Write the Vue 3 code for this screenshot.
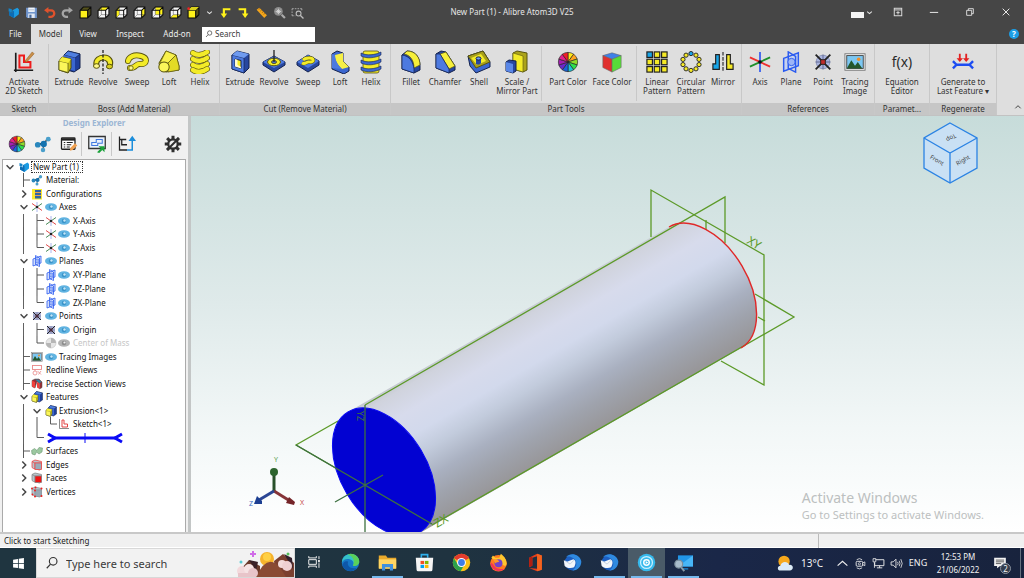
<script setup>
const qa = (part) => {
  const y = '#fff21a'
  const faces = {
    front: `<path d="M2 8H16V22H2Z" fill="${y}"/>`,
    top: `<path d="M2 8L8 2H22L16 8Z" fill="${y}"/>`,
    left: `<path d="M2 8L8 2V16L2 22Z" fill="${y}"/>`,
    right: `<path d="M16 8L22 2V16L16 22Z" fill="${y}"/>`,
    back: `<path d="M8 2H22V16H8Z" fill="${y}"/>`,
    bottom: `<path d="M2 22L8 16H22L16 22Z" fill="${y}"/>`,
  }
  const solid = part === 'front'
  return `<path d="M2 8L8 2H22V16L16 22H2Z" fill="${solid ? '#55521a' : '#f6f6f6'}"/>${faces[part]}
  ${solid ? '' : '<path d="M8 3V16H22M8 16L2 22" stroke="#555" stroke-width="1" fill="none"/>'}
  <path d="M2 8L8 2H22V16L16 22H2ZM2 8H16V22M16 8L22 2" stroke="#0c0c0c" stroke-width="1.900" fill="none"/>`
}

const wheel = (() => {
  const cols = ['#ffe81a', '#ffa51f', '#8edb2a', '#2fe04c', '#1fc3d6', '#1a62d8', '#6a28c8', '#a31fb0', '#e3208c', '#f01f2a']
  return cols.map((c, i) => {
    const a = (i * 36 - 90) * Math.PI / 180, b = (i * 36 - 54) * Math.PI / 180
    const p = (t) => `${(12 + 10.5 * Math.cos(t)).toFixed(2)} ${(12 + 10.5 * Math.sin(t)).toFixed(2)}`
    return `<path d="M12 12L${p(a)}A10.500 10.500 0 0 1 ${p(b)}Z" fill="${c}" stroke="#222" stroke-width=".7"/>`
  }).join('')
})()

const ring = Array.from({ length: 10 }, (_, i) => {
  const a = (i * 36 - 90) * Math.PI / 180
  return `<circle cx="${(12 + 9.2 * Math.cos(a)).toFixed(2)}" cy="${(12 + 9.2 * Math.sin(a)).toFixed(2)}" r="2.300" fill="${i ? '#f6ea26' : '#18a5e8'}" stroke="#222" stroke-width="1"/>`
}).join('')

const squares = [1, 9, 17].flatMap((y, r) => [1, 9, 17].map((x, c) =>
  `<rect x="${x}" y="${y}" width="6" height="6" fill="${r + c ? '#f6ea26' : '#18a5e8'}" stroke="#222" stroke-width="1.300"/>`)).join('')

const thunderbird = `<circle cx="12" cy="12" r="10" fill="#1d5fc0"/><path d="M4 5C9 -1 21 1 23 10C24 18 16 23 12 22C19 17 18 9 12 6C9 4 6 4 4 5Z" fill="#2f8ae0"/><path d="M1 9L5 11L13 8C16 9 17 13 14 18C10 20 4 19 2 16Z" fill="#f3f6fa"/><path d="M3 10L9 14L14 9" stroke="#b9c8da" fill="none"/>`
const boxIcon = `<path d="M7 5L11 1L23 4V18L17 22L7 19Z" fill="#1f3f9c" stroke="#14224e"/><path d="M7 5L18 8L23 4L11 1Z" fill="#4f7fe0" stroke="#14224e" stroke-width=".7"/><path d="M7 5L18 8V21L7 18Z" fill="#3b67cf"/><path d="M2 11L5 7L14 9V18L11 23L2 20Z" fill="#c9c21c" stroke="#4c4a10"/><path d="M2 11L11 13V22.500L2 20Z" fill="#fbf65a" stroke="#4c4a10" stroke-width=".7"/><path d="M2 11L5 7L14 9L11 13Z" fill="#f3ee3a"/>`
const picture = `<rect x="1" y="3" width="22" height="18" fill="#f4f4f4" stroke="#777"/><rect x="3" y="5" width="18" height="14" fill="#7cc7f2" stroke="#444"/><path d="M3 19L8 10L12 16L15 12L20 19Z" fill="#24572c"/><circle cx="16" cy="9" r="2" fill="#f0902a"/>`
const edgeBox = (s, f) => `<path d="M2 5L8 2L21 5V19L17 22L5 19L2 17Z" fill="#b9c4cc" stroke="${s}" stroke-width="1.600"/><path d="M2 5L8 8H21M8 8V21" stroke="${s}" stroke-width="1.600" fill="none"/><path d="M8 8H21V21H8Z" fill="${f}" stroke="${s}" stroke-width="1.400"/>`

const icons = {
  part: `<path d="M3 4L9 6V12L3 10Z" fill="#1684c9"/><path d="M10 8L19 3L22 6V15L13 22L4 17V11L10 13Z" fill="#1c9be2"/><path d="M10 8L13 10V22L4 17V11L10 13Z" fill="#0c6cb5"/>`,
  save: `<path d="M2 3H22V22H4L2 20Z" fill="#6f94cc"/><rect x="6" y="3" width="12" height="8" fill="#f0f4fa"/><rect x="6" y="14" width="12" height="8" fill="#e2e9f3"/><rect x="8" y="16" width="4" height="6" fill="#45699f"/><path d="M7 7H17" stroke="#9aa9c0" stroke-width="1.200"/>`,
  undo: `<path d="M10 2L2 8L10 14V10H15C20 10 20 18 14 18H10V22H15C26 21 25 6 15 6H10Z" fill="#e0522c"/>`,
  redo: `<path d="M14 2L22 8L14 14V10H9C4 10 4 18 10 18H13V22H9C-2 21 -1 6 9 6H14Z" fill="#a6a6a6"/>`,
  qfront: qa('front'), qtop: qa('top'), qleft: qa('left'), qright: qa('right'), qback: qa('back'), qbottom: qa('bottom'),
  qiso: qa('front') + '<path d="M2 8L8 2H22L16 8Z" fill="#d8cf1c"/><circle cx="3" cy="5" r="2.500" fill="#e22"/>',
  caret: `<path d="M4 9L12 16L20 9" fill="none" stroke="#e8e8e8" stroke-width="3.500"/>`,
  stepl: `<path d="M21 6H9V15" stroke="#fff21a" stroke-width="4" fill="none"/><path d="M3 14H15L9 22Z" fill="#fff21a"/>`,
  stepr: `<path d="M3 6H15V15" stroke="#fff21a" stroke-width="4" fill="none"/><path d="M9 14H21L15 22Z" fill="#fff21a"/>`,
  ruler: `<path d="M3 7L8 3L22 17L17 22Z" fill="#f3a51c"/><path d="M9 4L7 7M12 7L10 10M15 10L13 13M18 13L16 16" stroke="#8a5200" stroke-width="1"/>`,
  zoomfit: `<circle cx="10" cy="10" r="8" fill="#8d8d8d"/><path d="M5 10H15M10 5V15M7 7L13 13M13 7L7 13" stroke="#ddd" stroke-width="1.500"/><path d="M16 16L22 22" stroke="#aaa" stroke-width="4"/>`,
  zoomwin: `<path d="M2 5H20M2 18H8M2 5V18M20 5V9" stroke="#aaa" stroke-width="1.800" stroke-dasharray="3 2" fill="none"/><circle cx="14" cy="14" r="4.500" fill="none" stroke="#bbb" stroke-width="2"/><path d="M17 17L23 23" stroke="#bbb" stroke-width="2.500"/>`,
  sketch: `<path d="M3 2V21H22M1 21H3V23" stroke="#1a1a1a" stroke-width="1.800" fill="none"/><path d="M7 5H12V12H19V18H7Z" fill="none" stroke="#ee1c1c" stroke-width="2.200"/><path d="M13 11L21 1L23 3L15 12Z" fill="#c98f4a" stroke="#96601f" stroke-width=".6"/>`,
  extrude: boxIcon,
  revolve: `<path d="M3 15C2 8 8 5 13 5C20 5 23 11 21 16L16 17C18 12 15 10 12 10C8 10 7 13 8 16Z" fill="#f3eb28" stroke="#59540f" stroke-width="1.200"/><ellipse cx="5.500" cy="16" rx="3" ry="2.300" fill="#fff98a" stroke="#59540f"/><ellipse cx="18.500" cy="16.500" rx="3" ry="2.300" fill="#d4cc20" stroke="#59540f"/><path d="M12 0V24" stroke="#222" stroke-width="1.300" stroke-dasharray="3 1.500"/>`,
  sweep: `<path d="M5 18C12 18 10 13 16 14C22 14 23 8 16 6C9 4 4 7 3 11" fill="none" stroke="#59540f" stroke-width="6" stroke-linecap="round"/><path d="M5 18C12 18 10 13 16 14C22 14 23 8 16 6C9 4 4 7 3 11" fill="none" stroke="#f3eb28" stroke-width="4.400" stroke-linecap="round"/><circle cx="6" cy="18" r="2.200" fill="#fff98a" stroke="#59540f" stroke-width=".8"/>`,
  loft: `<path d="M9 1L19 5L22 16V20L9 22L3 18L2 13Z" fill="#cfc71e" stroke="#59540f"/><path d="M9 1L19 5L11 13L3 13Z" fill="#f8f14c" stroke="#59540f" stroke-width=".7"/><path d="M19 5L22 16V20L11 22L11 13Z" fill="#e3db26" stroke="#59540f" stroke-width=".7"/><ellipse cx="7" cy="17" rx="5.200" ry="5" fill="#fbf65a" stroke="#59540f"/>`,
  helix: [4, 10, 16, 21].map(y => `<path d="M5 ${y - 1}C9 ${y + 2} 15 ${y + 1} 19 ${y - 2}" fill="none" stroke="#59540f" stroke-width="5.800" stroke-linecap="round"/><path d="M5 ${y - 1}C9 ${y + 2} 15 ${y + 1} 19 ${y - 2}" fill="none" stroke="#f3eb28" stroke-width="4.600" stroke-linecap="round"/>`).join(''),
  cutextrude: `<path d="M4 5L9 1L21 4V18L16 23L4 19Z" fill="#27479f" stroke="#14224e"/><path d="M4 5L16 8V23L4 19Z" fill="#4d7ae0" stroke="#14224e" stroke-width=".7"/><path d="M4 5L16 8L21 4L9 1Z" fill="#6f9bf0"/><path d="M7 9L13 10.500V18.500L7 16.500Z" fill="#f3eb28" stroke="#14224e"/><path d="M7 9L9.500 9.700V15L13 17V18.500L7 16.500Z" fill="#fffbd0"/>`,
  cutrevolve: `<path d="M1 12L12 6L23 12V15L12 22L1 15Z" fill="#27479f" stroke="#14224e"/><path d="M1 12L12 6L23 12L12 18Z" fill="#4d7ae0"/><ellipse cx="12" cy="12" rx="6.500" ry="3.800" fill="#f3eb28" stroke="#59540f"/><ellipse cx="12" cy="12" rx="2.500" ry="1.500" fill="#4d7ae0" stroke="#59540f"/><path d="M12 0V12" stroke="#222" stroke-width="1.300"/>`,
  cutsweep: `<path d="M1 12L12 5L23 11V15L12 22L1 15Z" fill="#27479f" stroke="#14224e"/><path d="M1 12L12 5L23 11L12 18Z" fill="#4d7ae0"/><path d="M6 13C10 15 10 11 14 12C19 12 18 8 13 8C10 8 8 9 7 10" fill="none" stroke="#59540f" stroke-width="3.800"/><path d="M6 13C10 15 10 11 14 12C19 12 18 8 13 8C10 8 8 9 7 10" fill="none" stroke="#f3eb28" stroke-width="2.800"/>`,
  cutloft: `<path d="M4 4L9 1L15 3V11L21 17V21L16 24L4 19Z" fill="#3b67cf" stroke="#14224e"/><path d="M7 5L15 3V11L21 17L14 19C10 15 7 11 7 5Z" fill="#f6ef45"/><path d="M7 5C7 11 10 15 14 19L4 18V4Z" fill="#4d7ae0"/>`,
  cuthelix: `<rect x="4" y="1" width="16" height="22" rx="2" fill="#f3eb28" stroke="#59540f" stroke-width=".8"/>` + [3, 10, 17].map(y => `<path d="M2 ${y}C8 ${y + 3} 16 ${y + 2} 22 ${y - 1}V${y + 2}C16 ${y + 5} 8 ${y + 6} 2 ${y + 3}Z" fill="#3b67cf" stroke="#14224e" stroke-width=".6"/>`).join(''),
  fillet: `<path d="M3 5L8 1C17 1 21 8 21 16V20L15 23L3 19Z" fill="#27479f" stroke="#14224e"/><path d="M8 1C17 1 21 8 21 15L15 18C15 10 11 5 5 4Z" fill="#f6ef3a" stroke="#59540f" stroke-width=".7"/><path d="M3 5C11 6 14 12 15 19V23L3 19Z" fill="#4d7ae0" stroke="#14224e" stroke-width=".7"/>`,
  chamfer: `<path d="M3 4L8 1L13 2L22 16V20L16 23L3 18Z" fill="#27479f" stroke="#14224e"/><path d="M7 4L13 2L22 16L16 19Z" fill="#f6ef3a" stroke="#59540f" stroke-width=".7"/><path d="M3 4H7L16 19V23L3 18Z" fill="#4d7ae0" stroke="#14224e" stroke-width=".7"/>`,
  shell: `<path d="M1 6L16 1L23 12V17L9 23L3 16Z" fill="#3b67cf" stroke="#14224e"/><path d="M1 6L16 1L23 12L9 18Z" fill="#a8a01a" stroke="#59540f"/><path d="M4 8L14 4L19 11L10 15Z" fill="#f3eb28"/><path d="M9 9V14C10 15 13 15 14 13V8Z" fill="#27479f"/><ellipse cx="11.500" cy="8.500" rx="2.500" ry="1.600" fill="#6f9bf0" stroke="#14224e"/>`,
  scale: `<path d="M8 3L12 1L22 3V20L18 22L8 19Z" fill="#aba31a" stroke="#59540f"/><path d="M8 3L18 6V22L8 19Z" fill="#f3eb28" stroke="#59540f" stroke-width=".6"/><path d="M1 12L4 10L11 11V21L8 23L1 21Z" fill="#27479f" stroke="#14224e"/><path d="M1 12L8 14V23L1 21Z" fill="#5a88e8"/>`,
  wheel,
  facecolor: `<path d="M2 5L12 2L22 5L12 9Z" fill="#3f80e8" stroke="#666" stroke-width=".6"/><path d="M2 5L12 9V23L2 18Z" fill="#e0302e" stroke="#666" stroke-width=".6"/><path d="M22 5L12 9V23L22 18Z" fill="#58dc38" stroke="#666" stroke-width=".6"/>`,
  linear: squares,
  circular: ring,
  mirror: `<path d="M8 4V20H1V14H4V4Z" fill="#18a5e8" stroke="#222" stroke-width="1.300"/><path d="M16 4V20H23V14H20V4Z" fill="#f6ea26" stroke="#222" stroke-width="1.300"/><path d="M12 1V23" stroke="#222" stroke-width="1.200" stroke-dasharray="4 1.500"/>`,
  axis: `<path d="M12 1V23" stroke="#3c62ee" stroke-width="2"/><path d="M1 7L23 17" stroke="#ee3030" stroke-width="2"/><path d="M23 7L1 17" stroke="#1f8f2a" stroke-width="2"/><circle cx="12" cy="12" r="2" fill="#111"/>`,
  plane: `<path d="M4 8L20 2V16L4 22Z" fill="#b9cbf8" fill-opacity=".6" stroke="#2b5bf0" stroke-width="1.600"/><path d="M9 1L17 6V23L9 19Z" fill="none" stroke="#2b5bf0" stroke-width="1.600"/><circle cx="12.500" cy="12" r="4" fill="#9db5f6" stroke="#2b5bf0"/>`,
  point: `<circle cx="12" cy="12" r="7.500" fill="#a9b3de" stroke="#8790b5"/><path d="M4 4L20 20M20 4L4 20" stroke="#222" stroke-width="2"/><path d="M4 12H20M12 4V20" stroke="#5c648a" stroke-width="1"/><rect x="9.500" y="9.500" width="5" height="5" fill="#c22b2b" stroke="#222"/>`,
  image: picture,
  fx: `<text x="12" y="17" font-size="15" text-anchor="middle" fill="#2a2a2a" font-family="Noto Sans, sans-serif">f(x)</text>`,
  generate: `<path d="M8.500 3V10M15.500 3V10" stroke="#e32020" stroke-width="2"/><path d="M5 8L8.500 12L12 8ZM12 8L15.500 12L19 8Z" fill="#e32020"/><path d="M1 11L5 15H19L23 11M1 19L5 15M23 19L19 15" stroke="#1c4cf2" stroke-width="2.600" fill="none"/>`,
  material: `<path d="M5 13L13 12L18 6M13 12L12 19" stroke="#444" stroke-width="1.500"/><circle cx="5" cy="13" r="3.800" fill="#2a87bd"/><circle cx="13" cy="12" r="4.200" fill="#1473b0"/><circle cx="19" cy="5.500" r="3.300" fill="#4a9fcb"/><circle cx="12" cy="20" r="3" fill="#4a9fcb"/>`,
  props: `<rect x="2" y="4" width="18" height="15" rx="1" fill="#fff" stroke="#222" stroke-width="1.700"/><path d="M2 6H20" stroke="#222" stroke-width="3"/><path d="M5 10H7M9 10H17M5 13H7M9 13H15M5 16H7M9 16H13" stroke="#222" stroke-width="1.400"/><path d="M13 21L14 17L20 11L23 14L17 20Z" fill="#efa050"/>`,
  sketchview: `<path d="M1 2H23V18H1Z" fill="#eaf1fb" stroke="#333" stroke-width="1.700"/><path d="M5 14V10H11V6H19V11H13V14Z" fill="none" stroke="#3f78e0" stroke-width="1.400"/><path d="M12 23L17 18L14 15H22V23L19 20L15 24Z" fill="#1ba23b"/>`,
  treeup: `<path d="M2 2V20H8M2 6H8M5 6V13H9M8 6H11M8 13H12M8 20H12" stroke="#222" stroke-width="1.700" fill="none"/><path d="M12 20H19V5" stroke="#1c8edb" stroke-width="2" fill="none"/><path d="M14 8L19 1L24 8Z" fill="#1c8edb"/>`,
  gear: `<circle cx="12" cy="12" r="6.300" fill="none" stroke="#2f2f2f" stroke-width="3"/>` + [0, 45, 90, 135, 180, 225, 270, 315].map(a => `<rect x="10" y="1" width="4" height="5" fill="#2f2f2f" transform="rotate(${a} 12 12)"/>`).join('') + `<path d="M4 20L20 4" stroke="#2f2f2f" stroke-width="2.500"/>`,
  config: `<rect x="2" y="2" width="20" height="21" fill="#f7ea30"/><rect x="8" y="4" width="12" height="17" fill="#2d65a5"/><path d="M8 9H20M8 15H20" stroke="#e9a04a" stroke-width="2"/>`,
  taxis: `<path d="M12 2V22" stroke="#8f9fe8" stroke-width="1.500"/><path d="M2 5L22 19" stroke="#e04a4a" stroke-width="2"/><path d="M22 5L2 19" stroke="#4a8a58" stroke-width="2"/><circle cx="12" cy="12" r="2.500" fill="#222"/>`,
  eye: `<ellipse cx="12" cy="12" rx="12" ry="7.500" fill="#61b4e2"/><circle cx="12" cy="12" r="4.500" fill="#3a93c9"/><circle cx="13" cy="11" r="2.400" fill="#c5e6f7"/>`,
  eyeoff: `<ellipse cx="12" cy="12" rx="12" ry="7.500" fill="#b4b4b4"/><circle cx="12" cy="12" r="4.500" fill="#8d8d8d"/><circle cx="13" cy="11" r="2.200" fill="#eee"/>`,
  tpoint: `<rect x="4" y="4" width="16" height="16" fill="#aab0d2"/><path d="M4 4L20 20M20 4L4 20" stroke="#222" stroke-width="2"/><path d="M12 4V20M4 12H20" stroke="#7a7fa5" stroke-width="1.200"/><rect x="9" y="9" width="6" height="6" fill="#4a2a3a"/>`,
  com: `<circle cx="12" cy="12" r="10" fill="#e6e6e6" stroke="#b2b2b2"/><path d="M12 12V2A10 10 0 0 1 22 12ZM12 12V22A10 10 0 0 1 2 12Z" fill="#b6b6b6"/>`,
  redline: `<rect x="3" y="3" width="18" height="8" fill="none" stroke="#e98888" stroke-width="1.800"/><circle cx="8" cy="18" r="4" fill="none" stroke="#e98888" stroke-width="1.600"/><path d="M13 14L20 21M20 14L15 21M8 11V14" stroke="#e98888" stroke-width="1.600"/>`,
  section: `<path d="M2 5L8 2H16L22 8V19L17 22V11L12 7L8 20L2 17Z" fill="#9a2f35" stroke="#444"/><path d="M2 5L8 8V20L2 17ZM12 8L17 11V22L12 19Z" fill="#f0403c"/><path d="M8 3H15L21 8L17 10L12 6Z" fill="#2b8aa8"/>`,
  feature: boxIcon,
  tsketch: `<path d="M3 2V21H22" stroke="#666" stroke-width="1.500" fill="none"/><path d="M8 4H12V12H19V18H8Z" fill="none" stroke="#e24545" stroke-width="2"/>`,
  surface: `<path d="M1 11L7 7L12 11L16 5L23 6L22 14L16 18L11 14L8 20L2 18Z" fill="#9cc8a0" stroke="#5f8a66"/>`,
  edges: edgeBox('#e44', '#9aabb8'),
  faces: edgeBox('#888', '#f01414'),
  vertices: edgeBox('#8a969e', '#98a6b2') + [[2, 5], [9, 3], [21, 5], [8, 9], [21, 20], [8, 21], [3, 17]].map(([x, y]) => `<circle cx="${x}" cy="${y}" r="2" fill="#ee2222"/>`).join(''),
  winstart: `<path d="M2 5L11 3.500V11.500H2ZM12.500 3.300L22 2V11.500H12.500ZM2 13H11V20.500L2 19.200ZM12.500 13H22V22L12.500 20.700Z" fill="#fff"/>`,
  taskview: `<path d="M3 2V5H16V2M3 22V19H16V22M3 8H16V16H3Z" fill="none" stroke="#eee" stroke-width="1.700"/><path d="M20.500 2V7M20.500 14V22" stroke="#eee" stroke-width="1.700"/><rect x="19" y="8.500" width="3" height="4" fill="#eee"/>`,
  edge: `<circle cx="12" cy="12" r="11" fill="#1677c8"/><path d="M1.500 9C4 0 18 -2 22 7C25 13 20 17 15 16C17 14 16 9 11 8C7 7 3 8 1.500 12Z" fill="#35c1c9"/><path d="M12 1C20 1 24 8 23 12C22 16 18 17 15 16C18 11 16 4 8 2Z" fill="#5bd05a"/><path d="M9 11C7 16 12 21 20 18.500C15 25 5 24 2 16C2 12 6 9 9 11Z" fill="#0e57a8"/>`,
  folder: `<path d="M1 3H10L12 6H23V19H1Z" fill="#e9a92b"/><path d="M1 8H23V20H1Z" fill="#ffd663"/><path d="M5 22V14H19V22H15V18H9V22Z" fill="#3f91de"/>`,
  store: `<path d="M8 6V2H16V6" fill="none" stroke="#2fb0ec" stroke-width="2"/><path d="M1 6H23L22 21Q22 23 20 23H4Q2 23 2 21Z" fill="#f5f5f5"/><path d="M7 10H11.500V14H7Z" fill="#f25022"/><path d="M12.500 10H17V14H12.500Z" fill="#7fba00"/><path d="M7 15H11.500V19H7Z" fill="#00a4ef"/><path d="M12.500 15H17V19H12.500Z" fill="#ffb900"/>`,
  chrome: `<circle cx="12" cy="12" r="11" fill="#fbc116"/><path d="M12 12L2.500 6.500A11 11 0 0 1 21.500 6.500Z" fill="#e33b2e"/><path d="M2.500 6.500A11 11 0 0 0 11 23L16 14L7 14Z" fill="#2ca14c"/><circle cx="12" cy="12" r="5.600" fill="#fff"/><circle cx="12" cy="12" r="4.300" fill="#3f7de8"/>`,
  firefox: `<circle cx="12" cy="13" r="10.500" fill="#ff7a1f"/><path d="M3 6L5 3L8 6L13 6L15 1C20 5 23 10 22 15C18 20 14 8 7 9Z" fill="#ffc62e"/><path d="M2 12C2 22 13 26 20 20C14 21 8 20 5 14Z" fill="#f23558"/><circle cx="12" cy="13" r="5" fill="#7442c8"/><path d="M5 8C9 7 12 9 13 11C11 12 10 11 8 13Z" fill="#ff9a25"/>`,
  office: `<path d="M4 6L14 1L20 3V21L14 23L4 19L14 20V4L8 6V16L4 18Z" fill="#e8401c"/><path d="M4 6L8 4V16L4 18Z" fill="#b01f12"/><path d="M14 1L20 3V21L14 23Z" fill="#f4641f"/>`,
  thunderbird,
  alibre: `<circle cx="12" cy="12" r="11" fill="#36b9ec"/><circle cx="12" cy="12" r="7.500" fill="none" stroke="#c9f0ff" stroke-width="1.600"/><circle cx="12" cy="12" r="3.500" fill="none" stroke="#fff" stroke-width="1.800"/><path d="M11 10L14 12L11 14Z" fill="#fff"/>`,
  remote: `<path d="M5 3H24V17H5Z" fill="#2196e8"/><path d="M5 17L24 3V17Z" fill="#48b6f7"/><path d="M10 19H18V21H10Z" fill="#1676bd"/><circle cx="6" cy="14" r="5" fill="#a8bccb" stroke="#7a8d9b" stroke-width="1.500"/><path d="M9 18L13 23" stroke="#8a9aa6" stroke-width="2.500"/>`,
  weather: `<circle cx="10" cy="9" r="8" fill="#f6a81c"/><path d="M5 22C0 22 0 15 5 15C6 9 15 8 17 14C24 13 24 22 18 22Z" fill="#dcebf7"/>`,
  up: `<path d="M3 16L12 8L21 16" fill="none" stroke="#eee" stroke-width="2.200"/>`,
  cam: `<rect x="4" y="8" width="12" height="9" rx="2" fill="none" stroke="#eee" stroke-width="1.700"/><path d="M16 11L20 9V16L16 14" fill="none" stroke="#eee" stroke-width="1.500"/><circle cx="10" cy="12.500" r="2" fill="none" stroke="#eee" stroke-width="1.300"/><path d="M5 5Q10 1 15 5M5 20Q10 24 15 20" stroke="#eee" stroke-width="1.500" fill="none"/>`,
  net: `<path d="M7 5H22V16H5V11M14 16V20M9 20H19" fill="none" stroke="#eee" stroke-width="1.700"/><path d="M2 3H7V9H2ZM4.500 9V20" fill="none" stroke="#eee" stroke-width="1.500"/>`,
  sound: `<path d="M2 9H6L11 4V20L6 15H2Z" fill="none" stroke="#eee" stroke-width="1.600"/><path d="M14 9Q16 12 14 15M17 7Q20 12 17 17M20 4Q25 12 20 20" fill="none" stroke="#eee" stroke-width="1.500"/>`,
  note: `<path d="M2 3H22V17H12L7 21V17H2Z" fill="#f2f2f2"/><path d="M5 7H19M5 10H19M5 13H14" stroke="#333" stroke-width="1.300"/>`,
  ribbonopt: `<rect x="3" y="3" width="18" height="18" fill="none" stroke="#ddd" stroke-width="2.300"/><path d="M3 7H21" stroke="#ddd" stroke-width="2.300"/><path d="M12 18V10M8 13.500H16" stroke="#ddd" stroke-width="2.300"/>`,
  min: `<path d="M2 13H22" stroke="#eee" stroke-width="2.300"/>`,
  restore: `<path d="M4 8H16V20H4Z" fill="none" stroke="#eee" stroke-width="2"/><path d="M8 8V4H20V16H16" fill="none" stroke="#eee" stroke-width="2"/>`,
  close: `<path d="M4 4L20 20M20 4L4 20" stroke="#eee" stroke-width="2.300"/>`,
  search: `<circle cx="14" cy="9" r="6.500" fill="none" stroke="#333" stroke-width="2"/><path d="M9.500 14L3 21" stroke="#333" stroke-width="2"/>`,
}

const quick = ['part', 'save', 'undo', 'redo', 'qfront', 'qtop', 'qleft', 'qright', 'qback', 'qbottom', 'qiso', 'caret', 'stepl', 'stepr', 'ruler', 'zoomfit', 'zoomwin']
const tabs = [['File', 'tf'], ['Model', 'tm'], ['View', 'tv'], ['Inspect', 'ti'], ['Add-on', 'ta']]
const compact = ['sketch', 'linear', 'circular', 'mirror', 'axis', 'point', 'image', 'generate', 'plane', 'fx', 'facecolor', 'wheel']

const groups = [
  { name: 'Sketch', tools: [['sketch', 'Activate\n2D Sketch', 46]] },
  { name: 'Boss (Add Material)', pad: true, tools: [['extrude', 'Extrude', 34], ['revolve', 'Revolve', 34], ['sweep', 'Sweep', 34], ['loft', 'Loft', 30], ['helix', 'Helix', 32]] },
  { name: 'Cut (Remove Material)', pad: true, tools: [['cutextrude', 'Extrude', 34], ['cutrevolve', 'Revolve', 34], ['cutsweep', 'Sweep', 34], ['cutloft', 'Loft', 30], ['cuthelix', 'Helix', 32]] },
  { name: 'Part Tools', pad: true, tools: [['fillet', 'Fillet', 34], ['chamfer', 'Chamfer', 34], ['shell', 'Shell', 34], ['scale', 'Scale /\nMirror Part', 42], null, ['wheel', 'Part Color', 46], ['facecolor', 'Face Color', 42], null, ['linear', 'Linear\nPattern', 34], ['circular', 'Circular\nPattern', 34], ['mirror', 'Mirror', 30]] },
  { name: 'References', pad: true, tools: [['axis', 'Axis', 30], ['plane', 'Plane', 32], ['point', 'Point', 32], ['image', 'Tracing\nImage', 32]] },
  { name: 'Paramet...', tools: [['fx', 'Equation\nEditor', 52]] },
  { name: 'Regenerate', tools: [['generate', 'Generate to\nLast Feature ▾', 64]] },
]

const guides = {
  '|': 'M7 0V14', T: 'M7 0V14M7 7H14', L: 'M7 0V7H14',
}
const tree = [
  ['v', ['part'], 'New Part (1)'],
  ['_T', ['material'], 'Material:'],
  ['_>', ['config'], 'Configurations'],
  ['_v', ['taxis', 'eye'], 'Axes'],
  ['_|T', ['taxis', 'eye'], 'X-Axis'],
  ['_|T', ['taxis', 'eye'], 'Y-Axis'],
  ['_|L', ['taxis', 'eye'], 'Z-Axis'],
  ['_v', ['plane', 'eye'], 'Planes'],
  ['_|T', ['plane', 'eye'], 'XY-Plane'],
  ['_|T', ['plane', 'eye'], 'YZ-Plane'],
  ['_|L', ['plane', 'eye'], 'ZX-Plane'],
  ['_v', ['tpoint', 'eye'], 'Points'],
  ['_|T', ['tpoint', 'eye'], 'Origin'],
  ['_|L', ['com', 'eyeoff'], 'Center of Mass'],
  ['_T', ['image', 'eye'], 'Tracing Images'],
  ['_T', ['redline'], 'Redline Views'],
  ['_T', ['section'], 'Precise Section Views'],
  ['_v', ['feature'], 'Features'],
  ['_|v', ['feature'], 'Extrusion<1>'],
  ['_||L', ['tsketch'], 'Sketch<1>'],
  ['_|L', [], ''],
  ['_T', ['surface'], 'Surfaces'],
  ['_>', ['edges'], 'Edges'],
  ['_>', ['faces'], 'Faces'],
  ['_>', ['vertices'], 'Vertices'],
].map(([g, ic, label]) => ({ guides: g.split(''), icons: ic, label, off: ic.includes('eyeoff') }))

const apps = [['taskview', 'Task View'], ['edge', 'Edge'], ['folder', 'Explorer', 'run'], ['store', 'Store'], ['chrome', 'Chrome'], ['firefox', 'Firefox'], ['office', 'Office'], ['thunderbird', 'Thunderbird'], ['thunderbird', 'Mail', 'run'], ['alibre', 'Alibre', 'run active'], ['remote', 'Remote', 'run']]
</script>

<template>
  <div class="app">
    <header class="title">
      <nav class="quick">
        <button v-for="q in quick" :key="q" :class="{ narrow: q === 'caret' }" :aria-label="q">
          <svg viewBox="0 0 24 24" v-html="icons[q]" />
        </button>
      </nav>
      <h1>New Part (1) - Alibre Atom3D V25</h1>
      <div class="win">
        <button class="swatch" aria-label="Theme"><i /><svg viewBox="0 0 24 24" v-html="icons.caret" /></button>
        <button v-for="w in ['ribbonopt', 'min', 'restore', 'close']" :key="w" :aria-label="w"><svg viewBox="0 0 24 24" v-html="icons[w]" /></button>
      </div>
    </header>

    <div class="tabs">
      <button v-for="t in tabs" :key="t[0]" :class="[t[1], { on: t[0] === 'Model' }]">{{ t[0] }}</button>
      <label class="find">
        <svg viewBox="0 0 24 24" v-html="icons.search" />
        <input type="text" placeholder="Search" aria-label="Search commands">
      </label>
      <button class="help" aria-label="Help">?</button>
    </div>

    <div class="ribbon">
      <section v-for="g in groups" :key="g.name" class="group">
        <div class="tools" :class="{ pad: g.pad }">
          <template v-for="(t, i) in g.tools" :key="i">
            <button v-if="t" class="tool" :class="['w' + t[2], { compact: compact.includes(t[0]) }]">
              <svg viewBox="0 0 24 24" v-html="icons[t[0]]" /><span>{{ t[1] }}</span>
            </button>
            <i v-else class="sep" />
          </template>
        </div>
        <h2>{{ g.name }}</h2>
      </section>
      <button class="fold" aria-label="Collapse ribbon"><svg viewBox="0 0 24 24"><path d="M4 16L12 8L20 16" fill="none" stroke="#444" stroke-width="3" /></svg></button>
    </div>

    <main class="work">
      <aside class="explorer">
        <h3>Design Explorer</h3>
        <div class="bar">
          <button v-for="b in ['wheel', 'material', 'props', 'sketchview', 'treeup', 'gear']" :key="b" :class="b" :aria-label="b"><svg viewBox="0 0 24 24" v-html="icons[b]" /></button>
        </div>
        <ul class="tree">
          <li v-for="(r, i) in tree" :key="i" :class="{ off: r.off, root: i === 0 }">
            <span v-for="(g, k) in r.guides" :key="'g' + k" class="cell">
              <svg v-if="g === 'v'" viewBox="0 0 14 14"><path d="M3 5L7 9L11 5" fill="none" stroke="#444" stroke-width="1.700" /></svg>
              <svg v-else-if="g === '>'" viewBox="0 0 14 14"><path d="M5 3L9 7L5 11" fill="none" stroke="#444" stroke-width="1.700" /></svg>
              <svg v-else-if="guides[g]" class="fill" viewBox="0 0 14 14" preserveAspectRatio="none"><path :d="guides[g]" fill="none" stroke="#555" stroke-width="1" /></svg>
            </span>
            <span v-for="n in r.icons" :key="n" class="cell"><svg class="mini" viewBox="0 0 24 24" v-html="icons[n]" /></span>
            <span v-if="r.label" class="name">{{ r.label }}</span>
            <svg v-else class="endbar" viewBox="0 0 76 12"><path d="M1 2L8 6L1 10M75 2L68 6L75 10" fill="none" stroke="#0a0af5" stroke-width="3" /><path d="M5 6H71" stroke="#0a0af5" stroke-width="3" /><path d="M38 1V11" stroke="#0a0af5" stroke-width="1" /></svg>
          </li>
        </ul>
      </aside>

      <section class="view">
        <svg class="scene" viewBox="191 116 833 416" preserveAspectRatio="xMinYMin slice">
          <defs>
            <linearGradient id="body" gradientUnits="userSpaceOnUse" x1="348" y1="411" x2="419" y2="532">
              <stop offset="0" stop-color="#c3c8ce" /><stop offset=".06" stop-color="#d0d3dd" /><stop offset=".22" stop-color="#d7dbec" /><stop offset=".38" stop-color="#d2d9ec" />
              <stop offset=".52" stop-color="#c2cbdc" /><stop offset=".7" stop-color="#a9b0c0" /><stop offset=".84" stop-color="#9fa3ad" /><stop offset="1" stop-color="#98979a" />
            </linearGradient>
          </defs>
          <path d="M348 412L669 227A69 42 59 0 1 741 348L420 533Z" fill="url(#body)" />
          <g fill="none" stroke="#5c9a28" stroke-width="1.300">
            <path d="M651 237V190L764 255V385L721 361" />
            <path d="M725 243V197L365 405" />
            <path d="M755 294L794 317L432 525" />
            <path d="M338 421L296 445L365 485M706 220V230M758 317L765 321" />
          </g>
          <path d="M669 227A69 42 59 0 1 741 348" fill="none" stroke="#e02828" stroke-width="1.400" />
          <ellipse cx="384" cy="472" rx="70" ry="43" transform="rotate(59 384 472)" fill="#0202d2" stroke="#0808f4" stroke-width="1" />
          <path d="M365 405V532M296 445L432 524M335 502L383 475" fill="none" stroke="#3d7040" stroke-width="1.300" />
          <g fill="#5c9a28" font-family="Noto Sans, sans-serif" font-size="12">
            <text x="746" y="243" transform="rotate(31 746 243)">XY</text>
            <text x="357" y="411" transform="rotate(90 357 411)" font-size="9" fill="#3d7040">YZ</text>
            <text x="437" y="528" transform="rotate(-30 437 528)">ZX</text>
          </g>

          <g stroke-width="3">
            <path d="M274 491V473" stroke="#28502a" /><path d="M274 491L290 501" stroke="#863438" /><path d="M274 491L259 500" stroke="#2b4694" />
          </g>
          <circle cx="274" cy="472" r="4" fill="#2d642e" /><path d="M286 503L289 497L295 502L294 505Z" fill="#742428" /><path d="M254 504L257 496L262 501L262 504Z" fill="#1d3f92" />
          <g font-family="Noto Sans, sans-serif" font-size="7">
            <text x="274" y="462" fill="#5ca04c">Y</text><text x="300" y="505" fill="#c74848">X</text><text x="249" y="506" fill="#3a6dc4">Z</text>
          </g>

          <path d="M950 123L977 138V168L950 183L924 168V138Z" fill="#c9e0f4" stroke="#2b83e4" stroke-width="1.300" />
          <path d="M924 138L950 153L977 138M950 153V183" fill="none" stroke="#2b83e4" stroke-width="1.300" />
          <g font-family="Noto Sans, sans-serif" font-size="6" fill="#444" text-anchor="middle">
            <text x="950" y="136" transform="rotate(150 950 136)">Top</text>
            <text x="936" y="162" transform="rotate(30 936 162)">Front</text>
            <text x="964" y="162" transform="rotate(-30 964 162)">Right</text>
          </g>
        </svg>
        <div class="mark"><b>Activate Windows</b><span>Go to Settings to activate Windows.</span></div>
      </section>
    </main>

    <footer class="status"><span>Click to start Sketching</span><i /></footer>

    <div class="taskbar">
      <button class="start" aria-label="Start"><svg viewBox="0 0 24 24" v-html="icons.winstart" /></button>
      <label class="seek">
        <svg viewBox="0 0 24 24" v-html="icons.search" />
        <input type="text" placeholder="Type here to search" aria-label="Type here to search">
        <svg class="art" viewBox="0 0 58 28">
          <circle cx="31" cy="10" r="7" fill="#f6b32c" /><circle cx="31" cy="8" r="4" fill="#ffd044" />
          <path d="M5 20L13 11L24 17V28H6Z" fill="#6b3a2c" /><path d="M13 11L22 13L20 22Z" fill="#3a2028" />
          <path d="M38 12L47 5L58 14V28H40Z" fill="#7b4030" /><path d="M48 5L56 9L57 20Z" fill="#33202c" />
          <path d="M20 28Q32 2 45 20L50 28Z" fill="#8a4a33" />
          <circle cx="6" cy="22" r="5" fill="#f3d9dc" /><circle cx="13" cy="20" r="5" fill="#f6e3e4" /><circle cx="17" cy="24" r="5" fill="#e8c4c9" /><path d="M2 24H20V28H2Z" fill="#e8c4c9" />
          <circle cx="46" cy="15" r="4" fill="#f3dada" /><circle cx="51" cy="17" r="5" fill="#efd0d2" />
          <path d="M17 2V8M14 5H20" stroke="#d06be8" stroke-width="2" /><circle cx="5" cy="13" r="1.500" fill="#58cbd4" /><circle cx="52" cy="5" r="1.500" fill="#54c05a" />
        </svg>
      </label>
      <nav class="apps">
        <button v-for="a in apps" :key="a[1]" :class="a[2]" :aria-label="a[1]"><svg viewBox="0 0 24 24" v-html="icons[a[0]]" /></button>
      </nav>
      <div class="tray">
        <button class="wx"><svg viewBox="0 0 24 24" v-html="icons.weather" />13°C</button>
        <button v-for="s in ['up', 'cam', 'net', 'sound']" :key="s" class="sys" :aria-label="s"><svg viewBox="0 0 24 24" v-html="icons[s]" /></button>
        <button class="lang">ENG</button>
        <button class="clock">12:53 PM<br>21/06/2022</button>
        <button class="notes" aria-label="Notifications"><svg viewBox="0 0 24 24" v-html="icons.note" /><em>2</em></button>
      </div>
    </div>
  </div>
</template>

<style>
html, body { height: 100%; overflow: hidden; }
#app { height: 100%; }
</style>

<style scoped>
* { box-sizing: border-box; }
.app { height: 100vh; display: flex; flex-direction: column; font: 8px/10px "Noto Sans", sans-serif; color: #333; background: #f0f0f0; }
button { border: 0; padding: 0; margin: 0; background: none; font: inherit; color: inherit; display: flex; align-items: center; justify-content: center; }
input { border: 0; padding: 0; outline: 0; background: none; font: inherit; color: inherit; min-width: 0; }
svg { display: block; flex: none; }
h1, h2, h3, ul { margin: 0; padding: 0; font: inherit; }
i, em { font-style: normal; }

.title { height: 24px; flex: none; display: grid; grid-template-columns: 1fr auto 1fr; align-items: center; background: #464646; color: #e6e6e6; }
.quick { display: flex; padding-left: 4px; }
.quick button { width: 18px; height: 24px; }
.quick .narrow { width: 14px; }
.quick svg { width: 13px; height: 13px; }
.quick .narrow svg { width: 7px; height: 7px; }
.win { display: flex; justify-content: flex-end; }
.win button { width: 36px; height: 24px; }
.win svg { width: 10px; height: 10px; }
.win .swatch { gap: 2px; }
.swatch i { width: 13px; height: 6px; background: #f4f4f4; margin-top: 5px; }
.win .swatch svg { width: 7px; height: 7px; }

.tabs { height: 20px; flex: none; display: flex; align-items: center; background: #464646; color: #ececec; }
.tabs button { height: 20px; }
.tf { width: 31px; } .tm { width: 39px; } .tv { width: 36px; } .ti { width: 48px; } .ta { width: 46px; }
.tabs .on { background: #dedede; color: #333; }
.find { display: flex; align-items: center; width: 113px; height: 15px; margin-left: 2px; padding: 0 3px; gap: 2px; background: #fff; color: #333; }
.find svg { width: 8px; height: 8px; }
.find input { width: 90px; }
.find input::placeholder, .seek input::placeholder { color: #3a3a3a; opacity: 1; }
.tabs .help { width: 10px; height: 10px; border-radius: 5px; background: #1c9ee6; color: #fff; font-weight: bold; margin: 0 5px 0 auto; }

.ribbon { flex: none; display: flex; height: 72px; background: #dedede; border-bottom: 1px solid #c2c2c2; }
.group { display: flex; flex-direction: column; border-right: 1px solid #c8c8c8; }
.tools { flex: 1; display: flex; padding: 6px 1px 0; }
.tools.pad { padding: 6px 3px 0; }
.tool { flex-direction: column; justify-content: flex-start; gap: 3px; }
.tool svg { width: 24px; height: 24px; }
.tool.compact { padding-top: 1px; gap: 4px; }
.tool.compact svg { width: 22px; height: 22px; }
.tool span { white-space: pre; line-height: 9px; text-align: center; }
.w30 { width: 30px; } .w32 { width: 32px; } .w34 { width: 34px; } .w42 { width: 42px; } .w46 { width: 46px; } .w52 { width: 52px; } .w64 { width: 64px; }
.sep { width: 1px; margin: -4px 3px 2px; background: #c8c8c8; }
.group h2 { height: 12px; line-height: 12px; background: #c6c6c6; text-align: center; }
.fold { margin-left: auto; align-self: flex-end; width: 12px; height: 16px; }
.fold svg { width: 8px; height: 8px; }

.work { flex: 1; min-height: 0; display: flex; }
.explorer { width: 191px; flex: none; display: flex; flex-direction: column; padding: 0 2px 0 2px; border-right: 3px solid #c3c6c6; background: #f0f0f0; }
.explorer h3 { height: 13px; line-height: 13px; text-align: center; font-weight: bold; font-size: 8px; color: #9cb6d4; }
.bar { height: 30px; display: flex; align-items: center; padding-left: 2px; }
.bar button { width: 26px; height: 24px; }
.bar svg { width: 18px; height: 18px; }
.bar .props { border-right: 1px solid #c8c8c8; }
.bar .sketchview { width: 30px; border-right: 1px solid #c8c8c8; }
.bar .treeup { width: 30px; }
.bar .gear { margin-left: auto; }
.tree { flex: 1; min-height: 0; list-style: none; background: #fff; border: 1px solid #aaa; border-bottom: 0; color: #111; overflow: hidden; }
.tree li { height: 14px; display: flex; align-items: center; }
.tree li:nth-child(odd) { height: 13px; }
.tree li:nth-child(16n + 9) { height: 14px; }
.cell { width: 14px; height: 100%; flex: none; display: flex; align-items: center; justify-content: center; }
.cell:nth-child(even) { width: 13px; }
.cell svg { width: 12px; height: 12px; }
.cell .fill { width: 100%; height: 100%; }
.cell .mini { width: 12px; height: 12px; }
.name { padding-left: 2px; white-space: nowrap; }
.root .name { border: 1px dotted #333; padding: 0 3px 0 1px; margin-left: 1px; }
.off .name { color: #c6c6c6; }
.endbar { width: 76px; height: 12px; margin-left: 3px; }

.view { flex: 1; min-width: 0; position: relative; background: linear-gradient(#c7dcda, #dfeaea 45%, #f2f7f7 75%, #fff); overflow: hidden; }
.scene { width: 100%; height: 100%; }
.mark { position: absolute; right: 40px; bottom: 9px; display: flex; flex-direction: column; color: #bcc0c0; font-size: 11px; line-height: 16px; }
.mark b { font-weight: normal; font-size: 14px; line-height: 18px; }

.status { height: 16px; flex: none; display: flex; align-items: center; padding-left: 4px; border-top: 2px solid #c8c8c8; border-bottom: 1px solid #fff; background: #f0f0f0; color: #222; }
.status i { width: 206px; height: 14px; margin-left: auto; border-left: 1px solid #bbb; }

.taskbar { height: 30px; flex: none; display: flex; background: linear-gradient(90deg, #1f3540, #1f3340 45%, #1a2748 70%, #18233d); color: #f2f2f2; }
.start { width: 36px; }
.start svg { width: 13px; height: 13px; }
.seek { width: 259px; display: flex; align-items: center; background: #f2f2f2; color: #333; padding-left: 8px; font-size: 11px; border: 1px solid #d8d8d8; }
.seek svg { width: 14px; height: 14px; margin-right: 7px; }
.seek input { flex: 1; }
.seek .art { width: 58px; height: 28px; margin: 0; }
.apps { display: flex; }
.apps button { width: 37px; height: 30px; border-bottom: 2px solid transparent; }
.apps svg { width: 19px; height: 19px; }
.apps button:first-child svg { width: 14px; height: 14px; }
.apps .run { border-image: linear-gradient(90deg, transparent 10%, #76b9ed 10% 90%, transparent 90%) 1; border-width: 0 0 2px; border-style: solid; }
.apps .active { background: #4a5b68; }
.tray { margin-left: auto; display: flex; align-items: center; }
.wx { font-size: 10px; gap: 7px; margin-right: 10px; }
.wx svg { width: 17px; height: 17px; }
.sys { width: 18px; height: 30px; }
.sys svg { width: 13px; height: 13px; }
.lang { font-size: 9px; width: 26px; }
.clock { width: 54px; display: block; text-align: center; line-height: 13px; }
.notes { width: 36px; height: 30px; position: relative; padding-right: 6px; border-right: 1px solid #65707f; margin-right: 3px; }
.notes svg { width: 14px; height: 14px; }
.notes em { position: absolute; right: 9px; bottom: 4px; width: 11px; height: 11px; border-radius: 6px; background: #333c4c; border: 1px solid #8a93a0; font-size: 8px; line-height: 9px; }
</style>
